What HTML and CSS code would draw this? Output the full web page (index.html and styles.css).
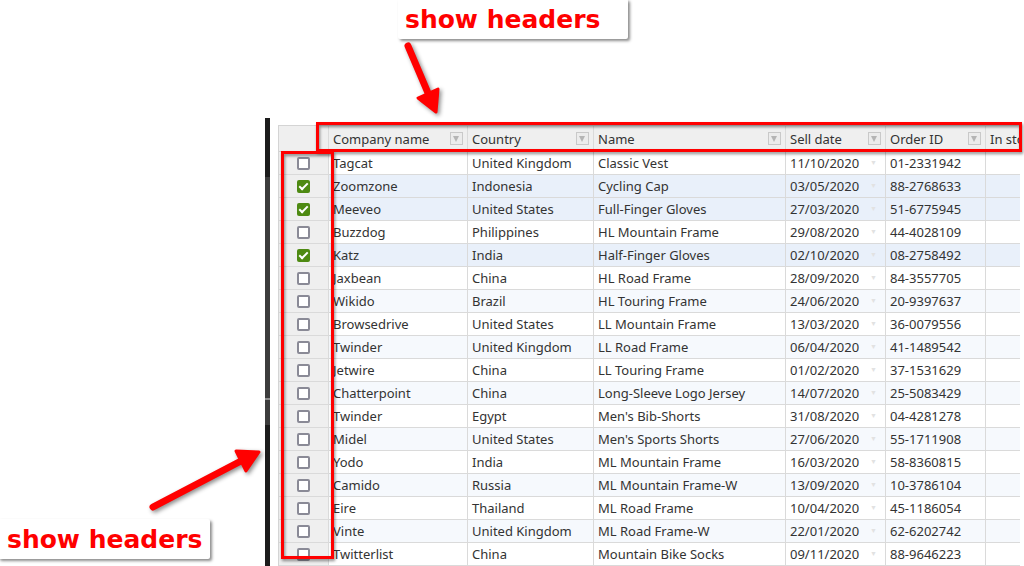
FILE: index.html
```html
<!DOCTYPE html>
<html>
<head>
<meta charset="utf-8">
<link rel="stylesheet" href="styles.css">
</head>
<body>
<div class="stage">
  <div class="workspace">
    <div class="bar"></div>
    <div class="grid">
      <div class="row head">
        <div class="cell sel"></div>
        <div class="cell">Company name<span class="filter"></span></div>
        <div class="cell">Country<span class="filter"></span></div>
        <div class="cell">Name<span class="filter"></span></div>
        <div class="cell">Sell date<span class="filter"></span></div>
        <div class="cell">Order ID<span class="filter"></span></div>
        <div class="cell">In stock<span class="filter"></span></div>
      </div>
      <div class="row"><div class="cell sel"><span class="cb"></span></div><div class="cell">Tagcat</div><div class="cell">United Kingdom</div><div class="cell">Classic Vest</div><div class="cell date">11/10/2020<span class="dd">▼</span></div><div class="cell">01-2331942</div><div class="cell"></div></div>
      <div class="row selected"><div class="cell sel"><span class="cb on"></span></div><div class="cell">Zoomzone</div><div class="cell">Indonesia</div><div class="cell">Cycling Cap</div><div class="cell date">03/05/2020<span class="dd">▼</span></div><div class="cell">88-2768633</div><div class="cell"></div></div>
      <div class="row selected"><div class="cell sel"><span class="cb on"></span></div><div class="cell">Meeveo</div><div class="cell">United States</div><div class="cell">Full-Finger Gloves</div><div class="cell date">27/03/2020<span class="dd">▼</span></div><div class="cell">51-6775945</div><div class="cell"></div></div>
      <div class="row"><div class="cell sel"><span class="cb"></span></div><div class="cell">Buzzdog</div><div class="cell">Philippines</div><div class="cell">HL Mountain Frame</div><div class="cell date">29/08/2020<span class="dd">▼</span></div><div class="cell">44-4028109</div><div class="cell"></div></div>
      <div class="row selected"><div class="cell sel"><span class="cb on"></span></div><div class="cell">Katz</div><div class="cell">India</div><div class="cell">Half-Finger Gloves</div><div class="cell date">02/10/2020<span class="dd">▼</span></div><div class="cell">08-2758492</div><div class="cell"></div></div>
      <div class="row"><div class="cell sel"><span class="cb"></span></div><div class="cell">Jaxbean</div><div class="cell">China</div><div class="cell">HL Road Frame</div><div class="cell date">28/09/2020<span class="dd">▼</span></div><div class="cell">84-3557705</div><div class="cell"></div></div>
      <div class="row alt"><div class="cell sel"><span class="cb"></span></div><div class="cell">Wikido</div><div class="cell">Brazil</div><div class="cell">HL Touring Frame</div><div class="cell date">24/06/2020<span class="dd">▼</span></div><div class="cell">20-9397637</div><div class="cell"></div></div>
      <div class="row"><div class="cell sel"><span class="cb"></span></div><div class="cell">Browsedrive</div><div class="cell">United States</div><div class="cell">LL Mountain Frame</div><div class="cell date">13/03/2020<span class="dd">▼</span></div><div class="cell">36-0079556</div><div class="cell"></div></div>
      <div class="row alt"><div class="cell sel"><span class="cb"></span></div><div class="cell">Twinder</div><div class="cell">United Kingdom</div><div class="cell">LL Road Frame</div><div class="cell date">06/04/2020<span class="dd">▼</span></div><div class="cell">41-1489542</div><div class="cell"></div></div>
      <div class="row"><div class="cell sel"><span class="cb"></span></div><div class="cell">Jetwire</div><div class="cell">China</div><div class="cell">LL Touring Frame</div><div class="cell date">01/02/2020<span class="dd">▼</span></div><div class="cell">37-1531629</div><div class="cell"></div></div>
      <div class="row alt"><div class="cell sel"><span class="cb"></span></div><div class="cell">Chatterpoint</div><div class="cell">China</div><div class="cell">Long-Sleeve Logo Jersey</div><div class="cell date">14/07/2020<span class="dd">▼</span></div><div class="cell">25-5083429</div><div class="cell"></div></div>
      <div class="row"><div class="cell sel"><span class="cb"></span></div><div class="cell">Twinder</div><div class="cell">Egypt</div><div class="cell">Men's Bib-Shorts</div><div class="cell date">31/08/2020<span class="dd">▼</span></div><div class="cell">04-4281278</div><div class="cell"></div></div>
      <div class="row alt"><div class="cell sel"><span class="cb"></span></div><div class="cell">Midel</div><div class="cell">United States</div><div class="cell">Men's Sports Shorts</div><div class="cell date">27/06/2020<span class="dd">▼</span></div><div class="cell">55-1711908</div><div class="cell"></div></div>
      <div class="row"><div class="cell sel"><span class="cb"></span></div><div class="cell">Yodo</div><div class="cell">India</div><div class="cell">ML Mountain Frame</div><div class="cell date">16/03/2020<span class="dd">▼</span></div><div class="cell">58-8360815</div><div class="cell"></div></div>
      <div class="row alt"><div class="cell sel"><span class="cb"></span></div><div class="cell">Camido</div><div class="cell">Russia</div><div class="cell">ML Mountain Frame-W</div><div class="cell date">13/09/2020<span class="dd">▼</span></div><div class="cell">10-3786104</div><div class="cell"></div></div>
      <div class="row"><div class="cell sel"><span class="cb"></span></div><div class="cell">Eire</div><div class="cell">Thailand</div><div class="cell">ML Road Frame</div><div class="cell date">10/04/2020<span class="dd">▼</span></div><div class="cell">45-1186054</div><div class="cell"></div></div>
      <div class="row alt"><div class="cell sel"><span class="cb"></span></div><div class="cell">Vinte</div><div class="cell">United Kingdom</div><div class="cell">ML Road Frame-W</div><div class="cell date">22/01/2020<span class="dd">▼</span></div><div class="cell">62-6202742</div><div class="cell"></div></div>
      <div class="row"><div class="cell sel"><span class="cb"></span></div><div class="cell">Twitterlist</div><div class="cell">China</div><div class="cell">Mountain Bike Socks</div><div class="cell date">09/11/2020<span class="dd">▼</span></div><div class="cell">88-9646223</div><div class="cell"></div></div>
    </div>
  </div>

  <div class="hl hl-head"></div>
  <div class="hl hl-side"></div>

  <svg class="arrows" width="1024" height="566" viewBox="0 0 1024 566">
    <g fill="#ff0000" stroke="#ff0000" stroke-linecap="round" stroke-linejoin="round">
      <line x1="408" y1="46" x2="428" y2="93" stroke-width="7"/>
      <polygon points="436,112 418,98 438,89" stroke-width="3"/>
      <line x1="153" y1="507" x2="241" y2="461" stroke-width="7"/>
      <polygon points="259,452 246,471 236,451" stroke-width="3"/>
    </g>
  </svg>

  <div class="label label-top">show headers</div>
  <div class="label label-bottom">show headers</div>
</div>
</body>
</html>
```
FILE: styles.css
```css
html, body {
  margin: 0;
  padding: 0;
  background: #ffffff;
}
body {
  width: 1024px;
  height: 566px;
  overflow: hidden;
  font-family: "Noto Sans", "Open Sans", sans-serif;
  font-size: 13px;
  color: #333333;
}
.stage {
  position: relative;
  width: 1024px;
  height: 566px;
  overflow: hidden;
}
.workspace {
  display: flex;
  gap: 8px;
  padding: 118px 0 0 265px;
}
.bar {
  flex: 0 0 5px;
  height: 448px;
  background: linear-gradient(to bottom,
    #1c1c1c 0, #1c1c1c 59px,
    #3c3c3c 59px, #3c3c3c 280px,
    #8e8e8e 280px, #8e8e8e 282px,
    #3c3c3c 282px, #3c3c3c 307px,
    #1c1c1c 307px, #1c1c1c 100%);
}
.grid {
  margin-top: 7px;
  width: 741px;
  overflow: hidden;
  border-left: 1px solid #d4d4d4;
  border-top: 1px solid #d4d4d4;
}
.row {
  display: grid;
  grid-template-columns: 50px 139px 126px 192px 100px 100px 120px;
  height: 23px;
  background: #ffffff;
}
.row.alt { background: #f6f9fd; }
.row.selected { background: #e9f0fa; }
.row.head {
  height: 26px;
  background: #efefef;
}
.cell {
  box-sizing: border-box;
  border-right: 1px solid #dadada;
  border-bottom: 1px solid #dadada;
  padding: 0 4px;
  display: flex;
  align-items: center;
  white-space: nowrap;
  overflow: hidden;
  line-height: 22px;
}
.head .cell {
  justify-content: space-between;
  border-bottom-color: #cfcfcf;
  padding-right: 4px;
}
.cell.sel {
  background: #efefef;
  justify-content: center;
  padding: 0;
}
.filter {
  flex: 0 0 auto;
  box-sizing: border-box;
  width: 13px;
  height: 13px;
  border: 1px solid #c9c9c9;
  background: #ececec;
  position: relative;
}
.filter::after {
  content: "";
  position: absolute;
  left: 2px;
  top: 3px;
  border-left: 3.5px solid transparent;
  border-right: 3.5px solid transparent;
  border-top: 6px solid #b5b5b5;
}
.date {
  justify-content: space-between;
  padding-right: 8px;
}
.dd {
  font-size: 7px;
  color: #e2e2e2;
}
.cb {
  box-sizing: border-box;
  width: 13px;
  height: 13px;
  border: 2px solid #8a8a96;
  border-radius: 2px;
  background: #ffffff;
  position: relative;
}
.cb.on {
  border: none;
  background: #4e8a12;
}
.cb.on::after {
  content: "";
  position: absolute;
  left: 4px;
  top: 1px;
  width: 3px;
  height: 7px;
  border-right: 2px solid #ffffff;
  border-bottom: 2px solid #ffffff;
  transform: rotate(45deg);
}
.hl {
  position: absolute;
  box-sizing: border-box;
  border: 3px solid #ff0000;
  filter: drop-shadow(1px 2px 1.5px rgba(0,0,0,0.45));
}
.hl-head {
  left: 316px;
  top: 122px;
  width: 706px;
  height: 30px;
}
.hl-side {
  left: 281px;
  top: 151px;
  width: 53px;
  height: 408px;
}
.arrows {
  position: absolute;
  left: 0;
  top: 0;
  pointer-events: none;
  filter: drop-shadow(2px 2px 2px rgba(0,0,0,0.45));
}
.label {
  position: absolute;
  box-sizing: border-box;
  background: #ffffff;
  color: #ff0000;
  font-family: "DejaVu Sans", sans-serif;
  font-weight: bold;
  font-size: 25px;
  line-height: 40px;
  height: 40px;
  padding: 1px 7px 0;
  border-radius: 2px;
  box-shadow: 2px 2px 3px rgba(0,0,0,0.45);
}
.label-top {
  left: 398px;
  top: -1px;
  width: 230px;
}
.label-bottom {
  left: -2px;
  top: 519px;
  width: 212px;
  padding-left: 9px;
}
```
